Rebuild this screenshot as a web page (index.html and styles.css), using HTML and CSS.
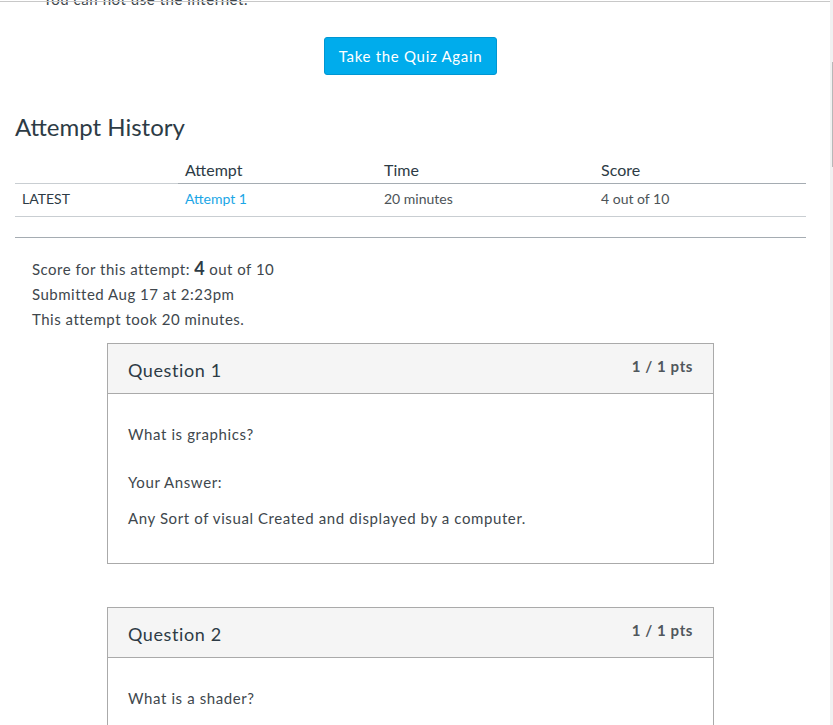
FILE: index.html
```html
<!DOCTYPE html>
<html lang="en">
<head>
<meta charset="utf-8">
<title>Quiz Results</title>
<link rel="stylesheet" href="styles.css">
</head>
<body>
<div class="frame">
  <div class="topline"></div>
  <main class="main">
    <p class="intro">You can not use the internet.</p>
    <div class="retake">
      <a class="btn" href="#">Take the Quiz Again</a>
    </div>

    <h2 class="history-title">Attempt History</h2>
    <div class="history">
      <div class="hcell hcell-blank"></div>
      <div class="hcell">Attempt</div>
      <div class="hcell">Time</div>
      <div class="hcell">Score</div>
      <div class="rcell rcell-label">LATEST</div>
      <div class="rcell"><a class="link" href="#">Attempt 1</a></div>
      <div class="rcell">20 minutes</div>
      <div class="rcell">4 out of 10</div>
    </div>
    <hr class="divider">

    <div class="summary">
      <div>Score for this attempt: <span class="score">4</span> out of 10</div>
      <div>Submitted Aug 17 at 2:23pm</div>
      <div>This attempt took 20 minutes.</div>
    </div>

    <section class="question">
      <header class="q-header">
        <span class="q-title">Question 1</span>
        <span class="q-pts">1 / 1 pts</span>
      </header>
      <div class="q-body">
        <p class="q-text">What is graphics?</p>
        <p class="q-label">Your Answer:</p>
        <p class="q-answer">Any Sort of visual Created and displayed by a computer.</p>
      </div>
    </section>

    <section class="question">
      <header class="q-header">
        <span class="q-title">Question 2</span>
        <span class="q-pts">1 / 1 pts</span>
      </header>
      <div class="q-body">
        <p class="q-text">What is a shader?</p>
        <p class="q-label">Your Answer:</p>
        <p class="q-answer">A program that tells the computer how to draw something.</p>
      </div>
    </section>
  </main>
  <div class="scrollbar"><div class="thumb"></div></div>
</div>
</body>
</html>
```

FILE: styles.css
```css
* { box-sizing: border-box; }

html, body {
  margin: 0;
  padding: 0;
  height: 100%;
  overflow: hidden;
  background: #ffffff;
}

body {
  font-family: Lato, "Open Sans", "Liberation Sans", sans-serif;
  color: #40474d;
  font-size: 15px;
}

.frame {
  position: relative;
  display: flex;
  height: 725px;
  overflow: hidden;
}

.topline {
  position: absolute;
  top: 1px;
  left: 0;
  width: 830px;
  height: 1px;
  background: #c8c8c8;
  z-index: 2;
}

.main {
  width: 830px;
  flex: 0 0 830px;
  padding: 0 24px 0 15px;
}

.scrollbar {
  flex: 0 0 3px;
  background: #f1f1f1;
  padding-left: 2px;
  padding-top: 62px;
}

.thumb {
  width: 1px;
  height: 105px;
  background: #b8b8b8;
}

.intro {
  margin: -11px 0 0 28px;
  line-height: 20px;
  font-size: 15px;
  letter-spacing: 0.55px;
}

.retake {
  display: flex;
  justify-content: center;
  margin-top: 28px;
}

.btn {
  display: inline-block;
  height: 38px;
  line-height: 36px;
  padding: 0 14px;
  background: #00acec;
  border: 1px solid #0096d2;
  border-radius: 3px;
  color: #ffffff;
  font-size: 15px;
  letter-spacing: 0.7px;
  text-decoration: none;
}

.history-title {
  margin: 37px 0 0;
  font-size: 24px;
  line-height: 30px;
  font-weight: 400;
  color: #2d3b45;
}

.history {
  display: grid;
  grid-template-columns: 163px 199px 217px 1fr;
  margin-top: 17px;
}

.hcell {
  padding: 1px 7px 3px;
  font-size: 16px;
  line-height: 20px;
  color: #2d3b45;
  border-bottom: 1px solid #a5acb2;
}

.hcell-blank {
  border-bottom-color: #c9ced2;
}

.rcell {
  padding: 5px 7px 7px;
  font-size: 14px;
  line-height: 20px;
  color: #4c5357;
  border-bottom: 1px solid #c9ced2;
}

.rcell-label {
  color: #2d3b45;
}

.link {
  color: #1ba6e6;
  text-decoration: none;
}

.divider {
  margin: 20px 0 0;
  border: 0;
  border-top: 1px solid #a5acb2;
  height: 0;
}

.summary {
  margin: 19px 0 0 17px;
  line-height: 25px;
  font-size: 15px;
  letter-spacing: 0.5px;
}

.score {
  font-size: 18px;
  font-weight: 700;
  line-height: 1;
  letter-spacing: 0;
  color: #2d3b45;
}

.question {
  width: 607px;
  margin: 11px auto 0;
  border: 1px solid #aaaaaa;
}

.question + .question {
  margin-top: 43px;
}

.q-header {
  display: flex;
  justify-content: space-between;
  align-items: flex-start;
  height: 50px;
  padding: 14px 20px 0;
  background: #f5f5f5;
  border-bottom: 1px solid #aaaaaa;
}

.q-title {
  font-size: 18px;
  line-height: 24px;
  letter-spacing: 0.6px;
  color: #2d3b45;
}

.q-pts {
  margin-top: -1px;
  font-size: 15px;
  line-height: 18px;
  font-weight: 700;
  letter-spacing: 0.6px;
  color: #50575c;
}

.q-body {
  padding: 29px 20px 34px;
}

.q-body p {
  margin: 0;
  line-height: 22px;
  font-size: 15px;
  letter-spacing: 0.6px;
}

.q-text {
  margin-bottom: 26px !important;
}

.q-label {
  margin-bottom: 14px !important;
}
```
